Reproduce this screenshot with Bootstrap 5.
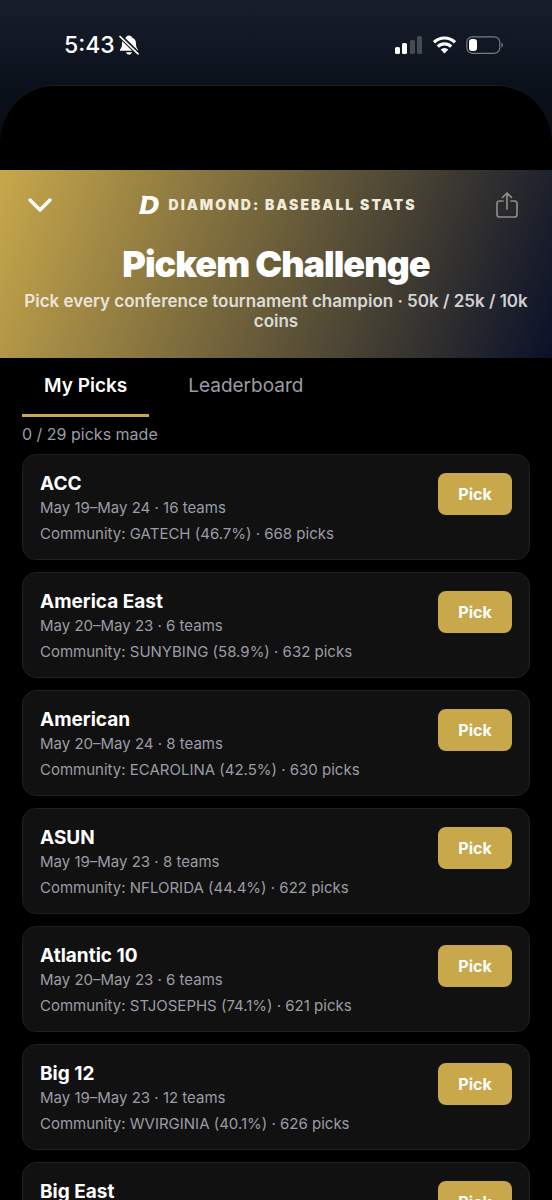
<!DOCTYPE html>
<html lang="en">
<head>
<meta charset="utf-8">
<meta name="viewport" content="width=device-width, initial-scale=1">
<title>Pickem Challenge</title>
<link href="https://cdn.jsdelivr.net/npm/bootstrap@5.3.0/dist/css/bootstrap.min.css" rel="stylesheet">
<style>
  :root { --gold: #c8a84b; --muted: #9b9ca5; }
  body { font-family: Inter, "Liberation Sans", sans-serif; background: #000; color: #fff; }
  .app-shell { background: linear-gradient(#171f2d, #0b111a 86px, #060a14 170px); }
  .status-bar { height: 85px; padding: 4px 48px 0 64px; }
  .status-time { font-size: 23px; line-height: 28px; font-weight: 500; }
  .status-icons { gap: 10px; }
  .sheet { background: #000; border-top: 1px solid #1b1b1b; border-radius: 54px 54px 0 0 / 58px 58px 0 0; padding-top: 84px; min-height: 0; }
  .hero { background: linear-gradient(110deg, #c8a84b, #0a1128); padding: 15px 20px 27px; }
  .hero-bar { padding-right: 5px; }
  .icon-btn { padding: 0; width: 40px; height: 40px; line-height: 0; }
  .icon-btn svg { display: block; margin: auto; }
  .brand-name { font-size: 14px; line-height: 20px; font-weight: 900; letter-spacing: 2px; color: #f1ebdb; }
  .hero-title { font-size: 36px; line-height: 42px; font-weight: 900; letter-spacing: -1px; margin: 18px 0 6px; }
  .hero-copy { font-size: 17px; line-height: 20px; font-weight: 600; color: rgba(255,255,255,.8); margin: 0; }
  .tabs { padding: 0 22px; gap: 17px; }
  .tabs .nav-link { border: 0; border-bottom: 3px solid transparent; border-radius: 0; padding: 15px 22px; font-size: 19px; line-height: 26px; color: var(--muted); }
  .tabs .nav-link.active { color: #fff; font-weight: 600; border-color: var(--gold); background: none; }
  .progress-note { font-size: 16px; line-height: 20px; color: var(--muted); margin: 7px 22px 10px; }
  .pick-list { padding: 0 22px; gap: 12px; min-height: 0; }
  .pick-card { background: #111; border: 1px solid #202020; border-radius: 14px; padding: 17px; height: 106px; }
  .pick-card h2 { font-size: 19px; line-height: 24px; font-weight: 700; margin: 0; }
  .pick-card p { font-size: 15px; line-height: 24px; margin: 0; color: var(--muted); }
  .pick-card p + p { margin-top: 2px; }
  .btn-pick { background: var(--gold); color: #fff; font-size: 16px; line-height: 20px; font-weight: 700; border: 0; border-radius: 8px; width: 74px; height: 42px; margin-top: 1px; padding: 0; }
  .btn-pick:hover { background: #b8983f; color: #fff; }
</style>
</head>
<body>
<div class="app-shell vh-100 overflow-hidden d-flex flex-column">
  <header class="status-bar d-flex align-items-center justify-content-between flex-shrink-0">
    <div class="d-flex align-items-center gap-1">
      <span class="status-time">5:43</span>
      <svg width="20" height="20" viewBox="0 0 20 20" aria-label="Silent mode"><path fill="#fff" d="M10 .5c1.600 0 2.700.8 3 1.900C15.700 3.300 17 5.600 17 8.500c0 3.500.8 4.500 2 6v1.300H1v-1.300c1.200-1.500 2-2.500 2-6 0-2.900 1.300-5.200 4-6.100C7.300 1.300 8.400.5 10 .5zM7 17.200h6c-.5 1.600-1.600 2.300-3 2.300s-2.500-.7-3-2.300z"/><path d="M1 1l18 17.500" stroke="#111821" stroke-width="4.400"/><path d="M1 1.500l18 17.300" stroke="#fff" stroke-width="1.700" stroke-linecap="round"/></svg>
    </div>
    <div class="status-icons d-flex align-items-center">
      <svg width="28" height="18" viewBox="0 0 28 18" aria-label="Signal"><g fill="#fff"><rect x="0" y="11" width="5" height="7" rx="1.500"/><rect x="7" y="7" width="5" height="11" rx="1.500"/><rect x="15" y="4" width="5" height="14" rx="1.500" opacity=".22"/><rect x="22" y="0" width="5" height="18" rx="1.500" opacity=".22"/></g></svg>
      <svg width="23" height="18" viewBox="0 0 23 18" aria-label="Wi-Fi"><g fill="none" stroke="#fff" stroke-width="3.200"><path d="M1 6.300a15 15 0 0 1 21 0"/><path d="M4.800 10.700a9.500 9.500 0 0 1 13.400 0"/></g><path fill="#fff" d="M7.700 13.600a5.500 5.500 0 0 1 7.600 0L11.500 17.500z"/></svg>
      <svg width="38" height="18" viewBox="0 0 38 18" aria-label="Battery"><rect x=".8" y=".8" width="33" height="16.500" rx="5.500" fill="none" stroke="#767c85" stroke-width="1.200"/><rect x="3" y="3" width="8" height="12" rx="3" fill="#fff"/><path d="M35.500 6.500c2 .8 2 4.200 0 5z" fill="#767c85"/></svg>
    </div>
  </header>

  <main class="sheet flex-grow-1 d-flex flex-column overflow-hidden">
    <section class="hero text-center flex-shrink-0">
      <div class="hero-bar d-flex align-items-center justify-content-between">
        <button type="button" class="btn icon-btn" aria-label="Close"><svg width="26" height="16" viewBox="0 0 26 16"><path d="M3 3l10 10L23 3" fill="none" stroke="#fff" stroke-width="3.400" stroke-linecap="round" stroke-linejoin="round"/></svg></button>
        <div class="d-flex align-items-center gap-2 ms-2">
          <svg width="22" height="30" viewBox="0 0 22 30" aria-hidden="true"><text x="0" y="24" fill="#fff" font-family="DejaVu Sans, sans-serif" font-size="25" font-weight="700" font-style="italic">D</text><path d="M0 24l1-3h4v3zM3 5.800h4v3H4z" fill="#fff"/></svg>
          <span class="brand-name">DIAMOND: BASEBALL STATS</span>
        </div>
        <button type="button" class="btn icon-btn" aria-label="Share"><svg width="24" height="28" viewBox="0 0 24 28"><g fill="none" stroke="#8d8b87" stroke-width="1.700" stroke-linecap="round" stroke-linejoin="round"><path d="M8 10H4.500Q2 10 2 12.500v11Q2 26 4.500 26h15q2.500 0 2.500-2.500v-11Q22 10 19.500 10H16M12 18V2M7.500 6.500L12 2l4.500 4.500"/></g></svg></button>
      </div>
      <h1 class="hero-title">Pickem Challenge</h1>
      <p class="hero-copy">Pick every conference tournament champion · 50k / 25k / 10k coins</p>
    </section>

    <nav class="nav tabs flex-shrink-0" aria-label="Views">
      <a class="nav-link active" aria-current="page" href="#picks">My Picks</a>
      <a class="nav-link" href="#leaderboard">Leaderboard</a>
    </nav>

    <p class="progress-note flex-shrink-0">0 / 29 picks made</p>

    <div class="pick-list d-flex flex-column flex-grow-1" id="picks">
      <article class="pick-card d-flex justify-content-between flex-shrink-0"><div><h2>ACC</h2><p>May 19–May 24 · 16 teams</p><p>Community: GATECH (46.7%) · 668 picks</p></div><button type="button" class="btn btn-pick">Pick</button></article>
      <article class="pick-card d-flex justify-content-between flex-shrink-0"><div><h2>America East</h2><p>May 20–May 23 · 6 teams</p><p>Community: SUNYBING (58.9%) · 632 picks</p></div><button type="button" class="btn btn-pick">Pick</button></article>
      <article class="pick-card d-flex justify-content-between flex-shrink-0"><div><h2>American</h2><p>May 20–May 24 · 8 teams</p><p>Community: ECAROLINA (42.5%) · 630 picks</p></div><button type="button" class="btn btn-pick">Pick</button></article>
      <article class="pick-card d-flex justify-content-between flex-shrink-0"><div><h2>ASUN</h2><p>May 19–May 23 · 8 teams</p><p>Community: NFLORIDA (44.4%) · 622 picks</p></div><button type="button" class="btn btn-pick">Pick</button></article>
      <article class="pick-card d-flex justify-content-between flex-shrink-0"><div><h2>Atlantic 10</h2><p>May 20–May 23 · 6 teams</p><p>Community: STJOSEPHS (74.1%) · 621 picks</p></div><button type="button" class="btn btn-pick">Pick</button></article>
      <article class="pick-card d-flex justify-content-between flex-shrink-0"><div><h2>Big 12</h2><p>May 19–May 23 · 12 teams</p><p>Community: WVIRGINIA (40.1%) · 626 picks</p></div><button type="button" class="btn btn-pick">Pick</button></article>
      <article class="pick-card d-flex justify-content-between flex-shrink-0"><div><h2>Big East</h2></div><button type="button" class="btn btn-pick">Pick</button></article>
    </div>
  </main>
</div>
<script src="https://cdn.jsdelivr.net/npm/bootstrap@5.3.0/dist/js/bootstrap.bundle.min.js"></script>
</body>
</html>
